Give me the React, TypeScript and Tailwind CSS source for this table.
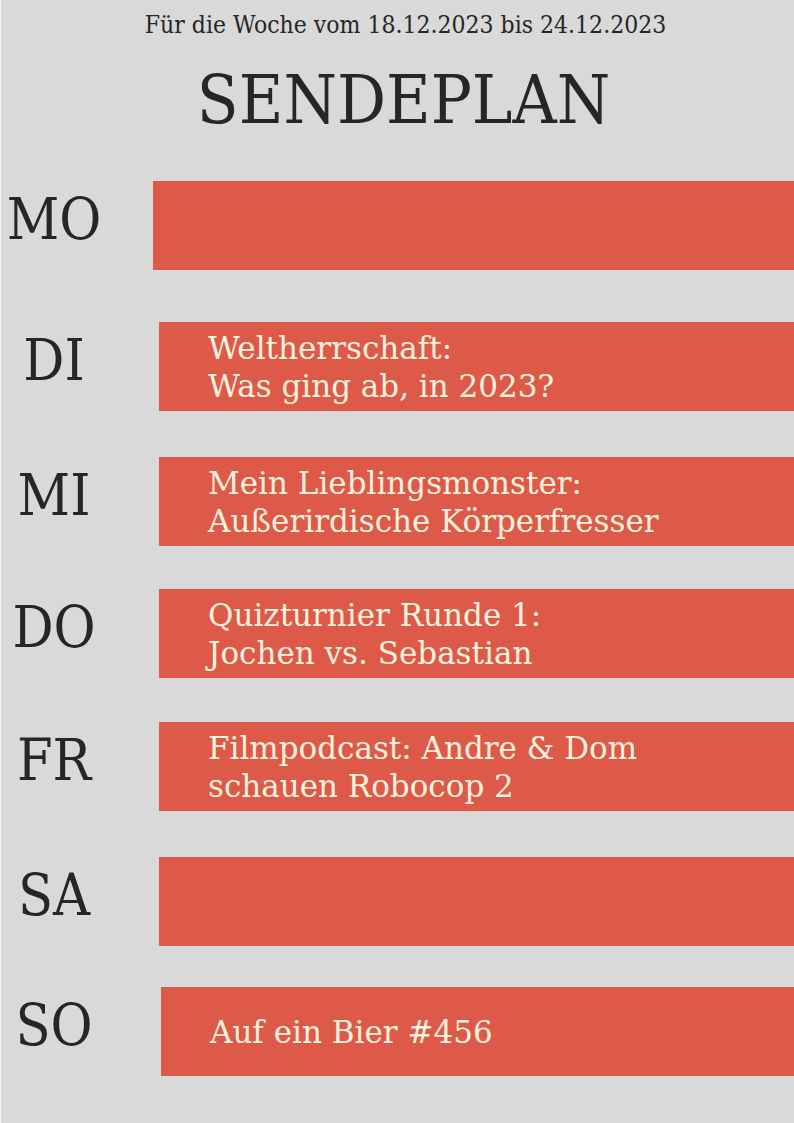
const days = [
    { day: "MO", top: "mt-[36px]", left: "ml-[152px]", lines: [] as string[] },
    { day: "DI", top: "mt-[52px]", left: "ml-[158px]", lines: ["Weltherrschaft:", "Was ging ab, in 2023?"] },
    { day: "MI", top: "mt-[46px]", left: "ml-[158px]", lines: ["Mein Lieblingsmonster:", "Außerirdische Körperfresser"] },
    { day: "DO", top: "mt-[43px]", left: "ml-[158px]", lines: ["Quizturnier Runde 1:", "Jochen vs. Sebastian"] },
    { day: "FR", top: "mt-[44px]", left: "ml-[158px]", lines: ["Filmpodcast: Andre & Dom", "schauen Robocop 2"] },
    { day: "SA", top: "mt-[46px]", left: "ml-[158px]", lines: [] as string[] },
    { day: "SO", top: "mt-[41px]", left: "ml-[160px]", lines: ["Auf ein Bier #456"] },
];

export default function App() {
    return (
        <div
            className="w-[794px] h-[1123px] bg-[#d9d9d9] border-l border-[#f2f2f2] text-[#262626] overflow-hidden"
            style={{ fontFamily: '"DejaVu Serif", "Liberation Serif", serif', fontStretch: "condensed" }}
        >
            {/* Header */}
            <div className="pt-[8px] pl-[16px] text-center text-[24.5px] leading-[34px]">
                Für die Woche vom 18.12.2023 bis 24.12.2023
            </div>
            <h1 className="mt-[13px] pl-[12px] text-center text-[68px] leading-[90px]">
                SENDEPLAN
            </h1>

            {/* Rows */}
            {days.map(row => (
                <div key={row.day} className={`relative flex h-[89px] ${row.top}`}>
                    <div className="absolute left-0 top-0 w-[106px] h-[76px] flex items-center justify-center text-[57px] leading-none">
                        {row.day}
                    </div>
                    <div
                        className={`flex-1 bg-[#de5a48] flex flex-col justify-center pl-[49px] text-[#fdf1df] text-[31px] leading-[38px] ${row.left}`}
                        style={{ fontStretch: "normal" }}
                    >
                        {row.lines.map(line => (
                            <div key={line}>{line}</div>
                        ))}
                    </div>
                </div>
            ))}
        </div>
    );
}
